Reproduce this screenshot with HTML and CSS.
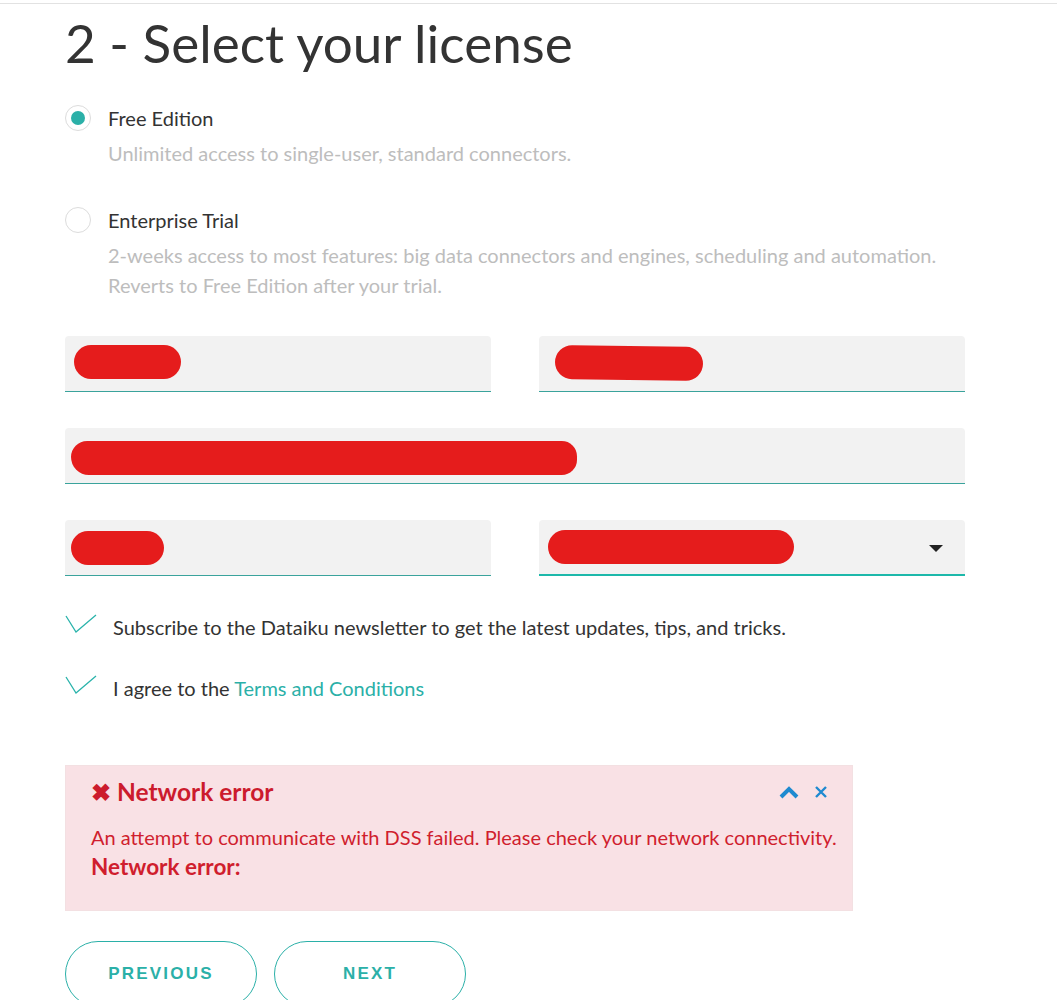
FILE: index.html
```html
<!DOCTYPE html>
<html>
<head>
    <link rel="stylesheet" href="styles.css">
</head>
<body>
    <div class="top-line"></div>
    <div class="page">
        <h1>2 - Select your license</h1>

        <div class="license">
            <label class="radio-row">
                <span class="radio checked"></span>
                <span class="radio-label">Free Edition</span>
            </label>
            <p class="license-desc">Unlimited access to single-user, standard connectors.</p>
        </div>

        <div class="license">
            <label class="radio-row">
                <span class="radio"></span>
                <span class="radio-label">Enterprise Trial</span>
            </label>
            <p class="license-desc">2-weeks access to most features: big data connectors and engines, scheduling and automation.<br>Reverts to Free Edition after your trial.</p>
        </div>

        <form class="fields">
            <div class="field-row">
                <div class="field"><span class="scribble s-first"></span></div>
                <div class="field"><span class="scribble s-last"></span></div>
            </div>
            <div class="field-row">
                <div class="field wide"><span class="scribble s-email"></span></div>
            </div>
            <div class="field-row">
                <div class="field"><span class="scribble s-company"></span></div>
                <div class="field select"><span class="scribble s-country"></span><span class="caret"></span></div>
            </div>

            <label class="check-row first">
                <svg class="check" width="32" height="20" viewBox="0 0 32 20"><polyline points="1,2 11,18 31,1" fill="none" stroke="#2ab3ab" stroke-width="1.3"/></svg>
                <span>Subscribe to the Dataiku newsletter to get the latest updates, tips, and tricks.</span>
            </label>
            <label class="check-row">
                <svg class="check" width="32" height="20" viewBox="0 0 32 20"><polyline points="1,2 11,18 31,1" fill="none" stroke="#2ab3ab" stroke-width="1.3"/></svg>
                <span>I agree to the <a href="#" class="link">Terms and Conditions</a></span>
            </label>
        </form>

        <div class="alert">
            <div class="alert-head">
                <h4><span class="alert-x">&#10006;</span> Network error</h4>
                <div class="alert-tools">
                    <svg width="22" height="14" viewBox="0 0 22 14"><polyline points="3,12 11,4 19,12" fill="none" stroke="#1f8ad0" stroke-width="4"/></svg>
                    <svg width="14" height="14" viewBox="0 0 14 14"><path d="M2 2 L12 12 M12 2 L2 12" stroke="#1f8ad0" stroke-width="2.4"/></svg>
                </div>
            </div>
            <p class="alert-msg">An attempt to communicate with DSS failed. Please check your network connectivity.</p>
            <p class="alert-detail">Network error:</p>
        </div>

        <div class="buttons">
            <button class="btn">PREVIOUS</button>
            <button class="btn">NEXT</button>
        </div>
    </div>
</body>
</html>
```

FILE: styles.css
```css
body {
    margin: 0;
    background: #fff;
    font-family: "Lato", "Liberation Sans", sans-serif;
    color: #333;
    overflow: hidden;
    height: 1000px;
}
.top-line {
    height: 3px;
    border-bottom: 1px solid #e2e2e2;
}
.page {
    padding-left: 65px;
    width: 900px;
}
h1 {
    font-weight: 400;
    font-size: 53px;
    color: #333;
    margin: 9px 0 0 0;
    line-height: 60px;
}
.license {
    margin-top: 31px;
}
.license + .license {
    margin-top: 38px;
}
.radio-row {
    display: flex;
    align-items: center;
    height: 28px;
}
.radio {
    width: 24px;
    height: 24px;
    border: 1px solid #dcdcdc;
    border-radius: 50%;
    margin-right: 17px;
    position: relative;
    box-sizing: content-box;
}
.radio.checked::after {
    content: "";
    position: absolute;
    left: 5px;
    top: 5px;
    width: 14px;
    height: 14px;
    border-radius: 50%;
    background: #2bb0a8;
}
.radio-label {
    font-size: 20px;
    color: #333;
}
.license-desc {
    margin: 6px 0 0 43px;
    font-size: 20px;
    line-height: 30px;
    color: #bdbdbd;
}
.fields {
    margin-top: 36px;
}
.field-row {
    display: flex;
    gap: 48px;
    margin-bottom: 36px;
}
.field {
    flex: 1;
    height: 55px;
    background: #f2f2f2;
    border-radius: 4px 4px 0 0;
    border-bottom: 1px solid #3aa39c;
    display: flex;
    align-items: center;
    position: relative;
}
.field.select {
    border-bottom: 2px solid #1db8aa;
    height: 54px;
}
.caret {
    position: absolute;
    right: 22px;
    top: 25px;
    border-left: 7px solid transparent;
    border-right: 7px solid transparent;
    border-top: 7px solid #222;
}
.scribble {
    display: block;
    height: 34px;
    background: #e51c1c;
    border-radius: 17px;
    margin-left: 9px;
}
.s-first { width: 107px; margin-top: -4px; }
.s-last { width: 148px; margin-left: 16px; margin-top: -2px; transform: rotate(0.8deg); }
.s-email { width: 506px; margin-left: 6px; margin-top: 4px; border-radius: 18px 17px 17px 20px; }
.s-company { width: 93px; margin-left: 6px; margin-top: 0; }
.s-country { width: 246px; margin-left: 9px; margin-top: 0; }
.check-row {
    display: flex;
    align-items: center;
    font-size: 20px;
    color: #333;
    margin-top: 37px;
}
.check-row.first {
    margin-top: 39px;
}
.check {
    margin-right: 16px;
    margin-top: -6px;
}
.link {
    color: #2bb0a8;
    text-decoration: none;
}
.alert {
    margin-top: 65px;
    width: 736px;
    background: #f9e1e5;
    border: 1px solid #f3e0e2;
    padding: 11px 25px 28px 25px;
    color: #d01e2e;
}
.alert-head {
    display: flex;
    align-items: center;
    justify-content: space-between;
}
.alert-head h4 {
    margin: 0;
    font-size: 24.5px;
    font-weight: 700;
    color: #cc1b2d;
}
.alert-x {
    font-size: 24px;
}
.alert-tools {
    display: flex;
    gap: 14px;
    align-items: center;
    margin-right: -1px;
}
.alert-msg {
    margin: 15px 0 0 0;
    font-size: 20px;
    line-height: 30px;
    white-space: nowrap;
}
.alert-detail {
    margin: 0;
    font-size: 22.5px;
    font-weight: 700;
    line-height: 30px;
}
.buttons {
    display: flex;
    gap: 17px;
    margin-top: 30px;
}
.btn {
    width: 192px;
    height: 66px;
    border: 1px solid #2bb0a8;
    border-radius: 33px;
    background: #fff;
    color: #2bb0a8;
    font-family: "Liberation Sans", sans-serif;
    font-weight: 700;
    font-size: 17px;
    letter-spacing: 2.2px;
}
```
